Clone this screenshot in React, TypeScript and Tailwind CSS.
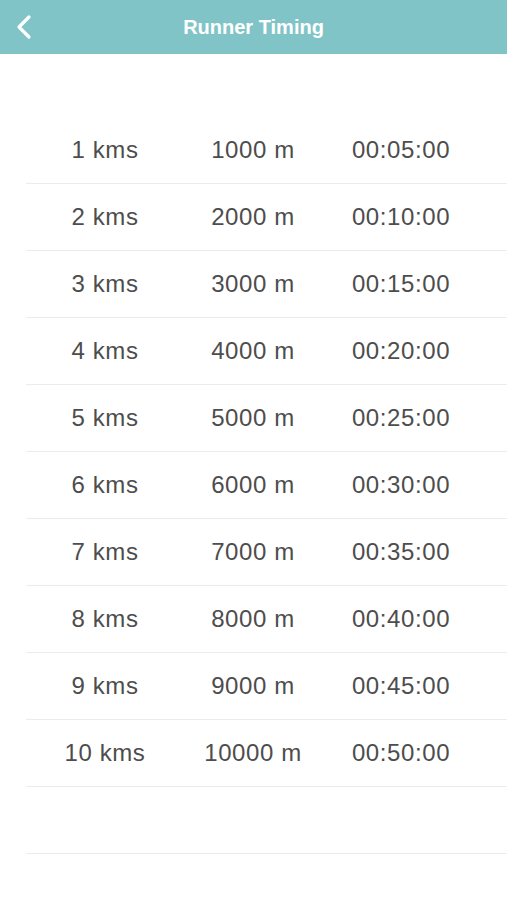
import React from "react";

const rows = Array.from({ length: 10 }, (_, i) => {
  const km = i + 1;
  const mins = String(km * 5).padStart(2, "0");
  return { label: `${km} kms`, meters: `${km * 1000} m`, time: `00:${mins}:00` };
});

const Row = ({ label, meters, time }: { label?: string; meters?: string; time?: string }) => (
  <div className="ml-[26px] h-[67px] border-b border-[#ececec] pl-[5px] grid grid-cols-[148px_148px_148px] items-center text-[24px] tracking-[0.6px] text-[#4d4d4d]">
    <span className="text-center">{label}</span>
    <span className="text-center">{meters}</span>
    <span className="text-center">{time}</span>
  </div>
);

export default function App() {
  return (
    <div className="w-[507px] h-[900px] bg-white font-['Liberation_Sans',Arial,sans-serif] overflow-hidden">
      <header className="relative h-[54px] bg-[#81c4c8] flex items-center justify-center">
        <button className="absolute left-[14px] top-[14px] w-[20px] h-[26px]" aria-label="Back">
          <svg width="20" height="26" viewBox="0 0 20 26" fill="none">
            <path d="M15 3 L5 13 L15 23" stroke="white" strokeWidth="3.2" strokeLinecap="round" strokeLinejoin="round" />
          </svg>
        </button>
        <h1 className="text-white text-[20px] font-bold">Runner Timing</h1>
      </header>
      <div className="h-[63px]" />
      <div>
        {rows.map((r) => (
          <Row key={r.label} {...r} />
        ))}
        <Row />
      </div>
    </div>
  );
}
